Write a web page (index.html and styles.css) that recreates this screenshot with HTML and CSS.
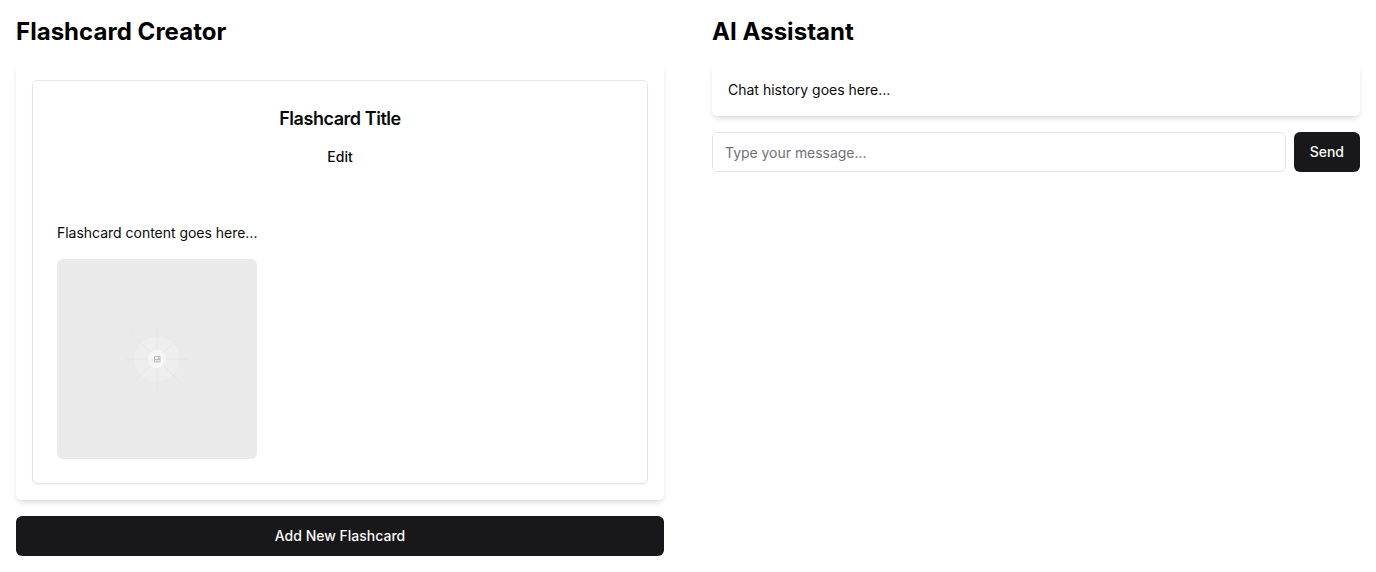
FILE: index.html
```html
<!DOCTYPE html>
<html lang="en">
<head>
<meta charset="utf-8">
<title>Flashcard Creator</title>
<link rel="stylesheet" href="styles.css">
</head>
<body>
<div class="layout">
  <section class="panel">
    <h1 class="heading">Flashcard Creator</h1>
    <div class="surface">
      <article class="card">
        <header class="card-header">
          <h2 class="card-title">Flashcard Title</h2>
          <button class="button ghost">Edit</button>
        </header>
        <div class="card-content">
          <p class="card-text">Flashcard content goes here...</p>
          <svg class="placeholder" viewBox="0 0 200 200" aria-hidden="true">
            <rect width="200" height="200" fill="#eaeaea"/>
            <circle cx="100" cy="100" r="22.5" fill="#eeeeee"/>
            <g stroke="#e4e4e4" stroke-width=".9">
              <path d="M69 100h62M100 69v62M73 73l54 54M127 73l-54 54"/>
            </g>
            <circle cx="100" cy="100" r="9.5" fill="#f5f5f5" stroke="#e8e8e8" stroke-width=".4"/>
            <path d="M97.5 97.5h5.5v5.5h-5.5zM97.5 100.5h2.500v2.500M103 100.500h-3M101.500 98v2.500" fill="none" stroke="#a6a6a6" stroke-width=".7"/>
          </svg>
        </div>
      </article>
    </div>
    <button class="button primary">Add New Flashcard</button>
  </section>
  <section class="panel">
    <h1 class="heading">AI Assistant</h1>
    <div class="surface"><p class="history">Chat history goes here...</p></div>
    <form class="composer">
      <input class="message" type="text" placeholder="Type your message...">
      <button class="button primary" type="button">Send</button>
    </form>
  </section>
</div>
</body>
</html>
```
FILE: styles.css
```css
*{box-sizing:border-box;margin:0;padding:0}
body{font-family:Inter,sans-serif;font-size:14px;line-height:20px;color:#09090b;background:#fff}
.layout{display:grid;grid-template-columns:1fr 1fr}
.panel{display:flex;flex-direction:column;padding:16px}
.panel + .panel{padding-left:24px}
.panel:first-child{padding-right:24px}
.heading{font-size:24px;line-height:32px;font-weight:700;letter-spacing:.04px;color:#000;margin-bottom:16px}
.surface{padding:16px;margin-bottom:16px;border-radius:6px;box-shadow:0 4px 6px -1px rgba(0,0,0,.1),0 2px 4px -2px rgba(0,0,0,.1)}
.card{border:1px solid #e4e4e7;border-radius:6px;box-shadow:0 1px 2px rgba(0,0,0,.05)}
.card-header{display:flex;flex-direction:column;align-items:center;padding:24px}
.card-title{font-size:18px;line-height:28px;font-weight:600;letter-spacing:-.025em}
.button{height:40px;padding:0 16px;border:0;border-radius:6px;font:500 14px/20px Inter,sans-serif}
.ghost{margin-top:4px;background:transparent;color:#09090b}
.primary{background:#18181b;color:#fafafa}
.card-content{padding:22px 24px 24px}
.card-text{margin-bottom:16px;letter-spacing:-.02px}
.placeholder{display:block;width:200px;height:200px;border-radius:6px}
.composer{display:flex;gap:8px}
.message{flex:1;min-width:0;height:40px;padding:8px 12px;border:1px solid #e4e4e7;border-radius:6px;background:#fff;font:400 14px/20px Inter,sans-serif}
.message::placeholder{color:#71717a;opacity:1;letter-spacing:-.03px}
```
